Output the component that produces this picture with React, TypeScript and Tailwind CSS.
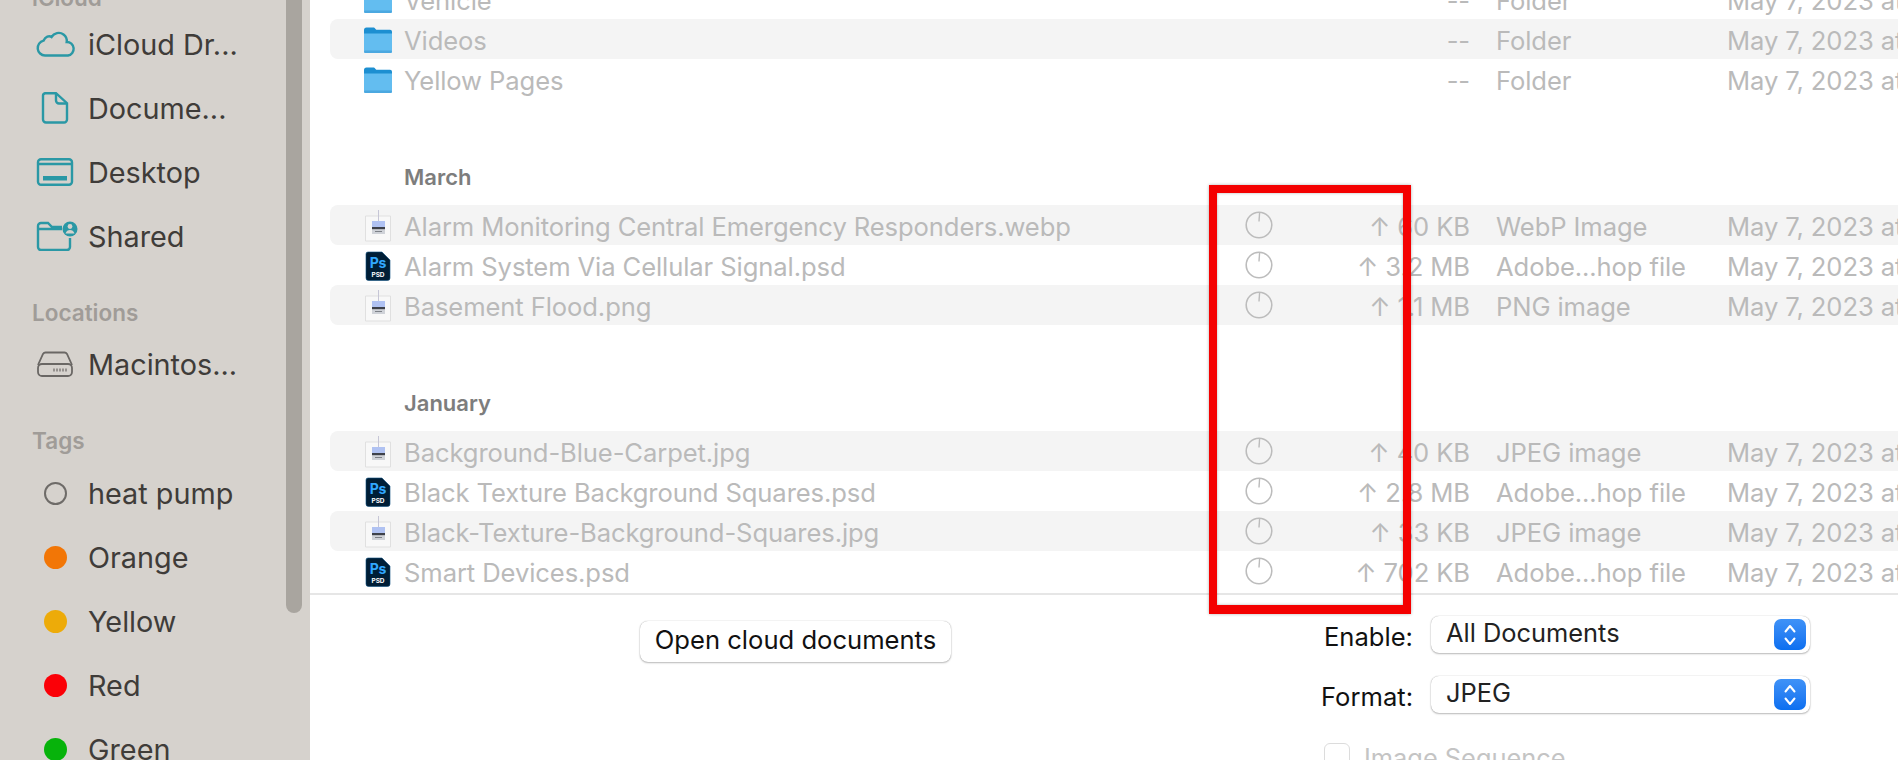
import React from 'react';

const teal = '#2a98a5';

function FolderIcon() {
   return (
      <svg width="30" height="28" viewBox="0 0 30 28" className="shrink-0">
         <path d="M1 4a2.500 2.500 0 012.500-2.500h6.500c1.200 0 1.700.5 2.500 1.400l.8.9H27a2 2 0 012 2V10H1z" fill="#1d8fd1" />
         <path d="M1 7.500h28V25a2 2 0 01-2 2H3a2 2 0 01-2-2z" fill="#63bdf0" />
         <rect x="1" y="24.500" width="28" height="2.500" rx="1.200" fill="#4ba8e0" />
      </svg>
   );
}

function ImageFileIcon() {
   return (
      <svg width="30" height="34" viewBox="0 0 30 34" className="shrink-0">
         <path d="M2.500 7h25v25h-25z" fill="#f8f8f8" stroke="#e0e0e0" strokeWidth="1" />
         <rect x="15" y="1" width="1" height="11" fill="#c6c6d6" />
         <rect x="9" y="12" width="13" height="6" fill="#b0c2f2" />
         <rect x="9" y="18" width="13" height="2.500" fill="#3d414a" />
         <rect x="9" y="20.500" width="13" height="4.500" fill="#cfd2d8" />
         <rect x="12" y="22" width="7" height="1" fill="#7d8188" />
      </svg>
   );
}

function PsdIcon() {
   return (
      <svg width="30" height="34" viewBox="0 0 30 34" className="shrink-0">
         <path d="M5 3h14l8 8v18a2.500 2.500 0 01-2.500 2.500h-19A2.500 2.500 0 013 29V5a2 2 0 012-2z" fill="#001e36" stroke="#0b4f80" strokeWidth="0.6" />
         <text x="15" y="19" textAnchor="middle" fontSize="14" fontWeight="700" fill="#31a8ff" fontFamily="Inter, sans-serif">Ps</text>
         <text x="15" y="28" textAnchor="middle" fontSize="6.500" fontWeight="700" fill="#ffffff" fontFamily="Inter, sans-serif">PSD</text>
      </svg>
   );
}

function ProgressIcon() {
   return (
      <svg width="28" height="28" viewBox="0 0 28 28" className="shrink-0">
         <circle cx="14" cy="14" r="12.800" fill="none" stroke="#bcbcbc" strokeWidth="1.600" />
         <path d="M14.600 1.500l-.6 9" fill="none" stroke="#bcbcbc" strokeWidth="1.400" />
      </svg>
   );
}

function Row({ name, size, kind, icon, shaded }: { name: string; size: string; kind: string; icon: 'folder' | 'image' | 'psd'; shaded?: boolean }) {
   return (
      <div className={`ml-[20px] h-[40px] flex items-center whitespace-nowrap overflow-hidden rounded-l-lg text-[25.6px] leading-[34px] tracking-[-0.1px] text-[#bababa] ${shaded ? 'bg-[#f4f4f4]' : ''}`}>
         <div className="w-[74px] pl-[33px] pt-[2px] flex items-center shrink-0">
            {icon === 'folder' && <FolderIcon />}
            {icon === 'image' && <ImageFileIcon />}
            {icon === 'psd' && <PsdIcon />}
         </div>
         <div className="w-[841px] pt-[4px] shrink-0">{name}</div>
         <div className="w-[28px] shrink-0">{icon !== 'folder' && <ProgressIcon />}</div>
         <div className="w-[197px] pt-[4px] shrink-0 text-right">{size}</div>
         <div className="w-[231px] ml-[26px] pt-[4px] shrink-0">{kind}</div>
         <div className="pt-[4px] shrink-0">May 7, 2023 at 2:15 PM</div>
      </div>
   );
}

function SideRow({ icon, label }: { icon: React.ReactNode; label: string }) {
   return (
      <div className="h-[64px] flex items-center text-[28.8px] text-[#3f3c39] whitespace-nowrap">
         <div className="w-[88px] pl-[36px] shrink-0 flex items-center">{icon}</div>
         <span className="pt-[2px]">{label}</span>
      </div>
   );
}

function TagDot({ color }: { color: string }) {
   return <div className="ml-[8px] w-[23px] h-[23px] rounded-full" style={{ background: color }} />;
}

function SideHeading({ label, className }: { label: string; className: string }) {
   return <div className={`pl-[32px] flex items-center text-[22.5px] font-semibold text-[#a09c98] ${className}`}>{label}</div>;
}

function MonthHeading({ label }: { label: string }) {
   return <div className="mt-[66px] mb-[16px] h-[24px] pl-[94px] flex items-center text-[22px] font-semibold text-[#7d7d7d]">{label}</div>;
}

function Stepper() {
   return (
      <div className="w-[32px] h-[31px] rounded-[7px] bg-gradient-to-b from-[#3f92f7] to-[#0a6ff0] flex items-center justify-center">
         <svg width="14" height="24" viewBox="0 0 14 24" fill="none" stroke="#ffffff" strokeWidth="2" strokeLinecap="round" strokeLinejoin="round">
            <path d="M2.500 8.500L7 3l4.500 5.500" />
            <path d="M2.500 15.500L7 21l4.500-5.500" />
         </svg>
      </div>
   );
}

function SelectRow({ label, value }: { label: string; value: string }) {
   return (
      <div className="flex items-start h-[37px]">
         <div className="w-[103px] pt-[6px] leading-[30px] text-right text-[25.6px] text-[#111111]">{label}</div>
         <div className="ml-[18px] w-[379px] h-[37px] pl-[15px] pr-[4px] flex items-center justify-between bg-white rounded-[8px] shadow-[0_0_1px_rgba(0,0,0,0.35),0_1px_2px_rgba(0,0,0,0.25)] text-[25.4px] text-[#222222]">
            <span className="-mt-[2px]">{value}</span>
            <Stepper />
         </div>
      </div>
   );
}

export default function App() {
   return (
      <div className="relative w-[1898px] h-[760px] overflow-hidden flex bg-white font-['Inter',sans-serif]">
         {/* Sidebar */}
         <div className="relative w-[310px] h-full shrink-0 overflow-hidden bg-[#d6d2cd]">
            <SideHeading label="iCloud" className="-mt-[16px] h-[28px]" />
            <SideRow
               label="iCloud Dr..."
               icon={
                  <svg width="40" height="26" viewBox="0 0 40 26" fill="none" stroke={teal} strokeWidth="2.400">
                     <path d="M9 24.500a7.500 7.500 0 01-1.500-14.800C9.500 5.500 13 4.500 15.500 6 18 2 23.500.5 27.500 3.500c3 2.200 3.500 5.500 3.200 7.500a6.800 6.800 0 011.300 13.500z" />
                  </svg>
               }
            />
            <SideRow
               label="Docume..."
               icon={
                  <svg width="38" height="32" viewBox="0 0 38 32" fill="none" stroke={teal} strokeWidth="2.400">
                     <path d="M9 1.200h11l11 10V27.500a3 3 0 01-3 3H10a3 3 0 01-3-3V3.500a2.500 2.500 0 012-2.300z" />
                     <path d="M20 1.500v7a3 3 0 003 3h8" />
                  </svg>
               }
            />
            <SideRow
               label="Desktop"
               icon={
                  <svg width="38" height="28" viewBox="0 0 38 28" fill="none" stroke={teal} strokeWidth="2.400">
                     <rect x="2" y="1.200" width="34" height="25.500" rx="3" />
                     <path d="M2 6h34" />
                     <rect x="7" y="18" width="24" height="4.500" fill={teal} stroke="none" />
                  </svg>
               }
            />
            <SideRow
               label="Shared"
               icon={
                  <svg width="42" height="30" viewBox="0 0 42 30" fill="none">
                     <path d="M2 8V5a3 3 0 013-3h7l4 4h10M2 8h24M2 8v18a3 3 0 003 3h26a3 3 0 003-3v-9" stroke={teal} strokeWidth="2.400" />
                     <circle cx="34" cy="8" r="7.500" fill={teal} />
                     <circle cx="34" cy="5.500" r="2.400" fill="#d6d2cd" />
                     <path d="M29.500 12.500c.8-2.500 2.500-3.500 4.500-3.500s3.700 1 4.500 3.500z" fill="#d6d2cd" />
                  </svg>
               }
            />
            <SideHeading label="Locations" className="mt-[33px] h-[24px]" />
            <div className="mt-[7px]">
               <SideRow
                  label="Macintos..."
                  icon={
                     <svg width="38" height="26" viewBox="0 0 38 26" fill="none" stroke="#6a6764" strokeWidth="1.800">
                        <path d="M2 14L7 3a3 3 0 012.500-1.500h19A3 3 0 0131 3l5 11" />
                        <rect x="2" y="13" width="34" height="12" rx="4" />
                        <path d="M18 17.500v3M21 17.500v3M24 17.500v3M27 17.500v3M30 17.500v3" strokeWidth="1.200" />
                     </svg>
                  }
               />
            </div>
            <SideHeading label="Tags" className="mt-[33px] h-[24px]" />
            <div className="mt-[8px]">
               <SideRow label="heat pump" icon={<div className="ml-[8px] w-[23px] h-[23px] rounded-full border-2 border-[#6e6b68]" />} />
               <SideRow label="Orange" icon={<TagDot color="#f27606" />} />
               <SideRow label="Yellow" icon={<TagDot color="#edab09" />} />
               <SideRow label="Red" icon={<TagDot color="#fb0007" />} />
               <SideRow label="Green" icon={<TagDot color="#07b30b" />} />
            </div>
            {/* Scrollbar */}
            <div className="absolute top-0 left-[286px] w-[16px] h-[613px] rounded-b-lg bg-[#a9a59f]" />
         </div>

         {/* Main */}
         <div className="flex-1 min-w-0 flex flex-col">
            <div className="h-[595px] shrink-0 overflow-hidden border-b-2 border-[#e6e6e6]">
               <div className="-mt-[21px]">
                  <Row name="Vehicle" size="--" kind="Folder" icon="folder" />
                  <Row name="Videos" size="--" kind="Folder" icon="folder" shaded />
                  <Row name="Yellow Pages" size="--" kind="Folder" icon="folder" />
               </div>
               <MonthHeading label="March" />
               <Row name="Alarm Monitoring Central Emergency Responders.webp" size="↑ 60 KB" kind="WebP Image" icon="image" shaded />
               <Row name="Alarm System Via Cellular Signal.psd" size="↑ 3.2 MB" kind="Adobe...hop file" icon="psd" />
               <Row name="Basement Flood.png" size="↑ 1.1 MB" kind="PNG image" icon="image" shaded />
               <MonthHeading label="January" />
               <Row name="Background-Blue-Carpet.jpg" size="↑ 40 KB" kind="JPEG image" icon="image" shaded />
               <Row name="Black Texture Background Squares.psd" size="↑ 2.8 MB" kind="Adobe...hop file" icon="psd" />
               <Row name="Black-Texture-Background-Squares.jpg" size="↑ 33 KB" kind="JPEG image" icon="image" shaded />
               <Row name="Smart Devices.psd" size="↑ 702 KB" kind="Adobe...hop file" icon="psd" />
            </div>

            {/* Bottom options */}
            <div className="flex-1 flex items-start overflow-hidden">
               <div className="ml-[330px] mt-[26px] w-[311px] h-[41px] pb-[2px] flex items-center justify-center bg-white rounded-[8px] shadow-[0_0_1px_rgba(0,0,0,0.35),0_1px_2px_rgba(0,0,0,0.25)] text-[25.6px] text-[#111111]">
                  Open cloud documents
               </div>
               <div className="ml-[359px] pt-[21px] flex flex-col gap-[23px]">
                  <SelectRow label="Enable:" value="All Documents" />
                  <SelectRow label="Format:" value="JPEG" />
                  <div className="mt-[5px] ml-[14px] flex items-center text-[25.4px] leading-[26px] text-[#c4c4c4]">
                     <div className="w-[26px] h-[26px] rounded-[6px] border border-[#dcdcdc] bg-white" />
                     <span className="ml-[14px] pt-[4px]">Image Sequence</span>
                  </div>
               </div>
            </div>
         </div>

         {/* Red annotation box */}
         <div className="absolute left-[1209px] top-[185px] w-[202px] h-[429px] border-[8px] border-b-[9px] border-[#f40000] shadow-[0_0_3px_rgba(0,0,0,0.3),inset_0_0_3px_rgba(0,0,0,0.3)]" />
      </div>
   );
}
